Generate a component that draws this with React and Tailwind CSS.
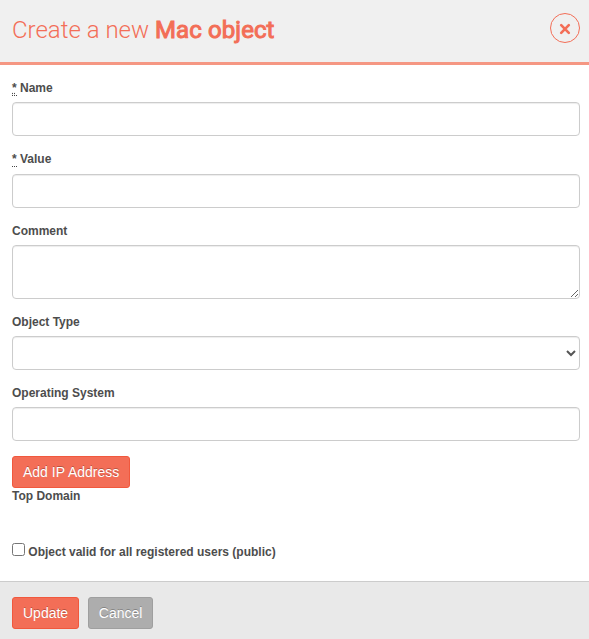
import React from "react";

const control =
  "block w-full rounded-[4px] border border-[#cccccc] bg-white px-3 text-[14px] text-[#555555] shadow-[inset_0_1px_1px_rgba(0,0,0,0.075)] outline-none";

function Label({ required, markClass = "[text-decoration:underline_dotted]", children }) {
  return (
    <label className="block h-[17px] text-[12px] leading-[17px] font-bold">
      {required && (
        <>
          <abbr
            title="required"
            className={`border-b border-dotted border-[#444444] ${markClass}`}
          >
            *
          </abbr>{" "}
        </>
      )}
      {children}
    </label>
  );
}

function Button({ className, children }) {
  return (
    <button
      className={`h-8 rounded-[3px] border text-[14px] leading-5 text-white [text-shadow:0_-1px_0_rgba(0,0,0,0.25)] ${className}`}
    >
      {children}
    </button>
  );
}

export default function App() {
  return (
    <div className="flex h-[639px] w-[589px] flex-col overflow-hidden bg-white font-['Liberation_Sans',Arial,sans-serif] text-[#4d4d4d]">
      <header className="flex h-[65px] shrink-0 justify-between border-b-[3px] border-[#f59783] bg-[#f0f0f0] pr-[9px] pl-3">
        <h1 className="pt-[14px] font-['Roboto',sans-serif] text-[24px] leading-8 font-light whitespace-nowrap text-[#f36e57]">
          Create a new{" "}
          <strong className="font-normal tracking-[0.1px] [-webkit-text-stroke:1px_#f36e57]">
            Mac object
          </strong>
        </h1>
        <button
          aria-label="Close"
          className="mt-[13px] flex size-[30px] items-center justify-center rounded-full border border-[#f36e57] text-[#f36e57]"
        >
          <svg width="12" height="12" viewBox="0 0 12 12" className="mt-[2px]">
            <path
              d="M2.2 2.2L9.8 9.8M9.8 2.2L2.2 9.8"
              stroke="currentColor"
              strokeWidth="2.6"
              strokeLinecap="round"
            />
          </svg>
        </button>
      </header>

      <form className="flex-1 pt-[15px] pr-[9px] pl-3">
        <div className="mb-[15px]">
          <Label required>Name</Label>
          <input className={`${control} mt-[5px] h-[34px]`} />
        </div>
        <div className="mb-[15px]">
          <Label required markClass="no-underline">
            Value
          </Label>
          <input className={`${control} mt-[6px] h-[34px]`} />
        </div>
        <div className="mb-[15px]">
          <Label>Comment</Label>
          <textarea className={`${control} mt-[5px] h-[54px] resize`} />
        </div>
        <div className="mb-[15px]">
          <Label>Object Type</Label>
          <select className={`${control} mt-[5px] h-[34px]`} />
        </div>
        <div className="mb-[15px]">
          <Label>Operating System</Label>
          <input className={`${control} mt-[5px] h-[34px]`} />
        </div>
        <Button className="block border-[#f1583d] bg-[#f36e57] px-[10px]">Add IP Address</Button>
        <Label>Top Domain</Label>
        <label className="mt-[38px] flex h-[18px] text-[12px] leading-[18px] font-bold">
          <input type="checkbox" className="mr-[3.3px] size-[13px] shrink-0" />
          Object valid for all registered users (public)
        </label>
      </form>

      <footer className="flex h-[58px] shrink-0 gap-[9px] border-t border-[#cccccc] bg-[#e9e9e9] pt-[15px] pl-3">
        <Button className="border-[#f1583d] bg-[#f36e57] px-[10px]">Update</Button>
        <Button className="w-[65px] border-[#9f9f9f] bg-[#adadad] whitespace-nowrap">Cancel</Button>
      </footer>
    </div>
  );
}
